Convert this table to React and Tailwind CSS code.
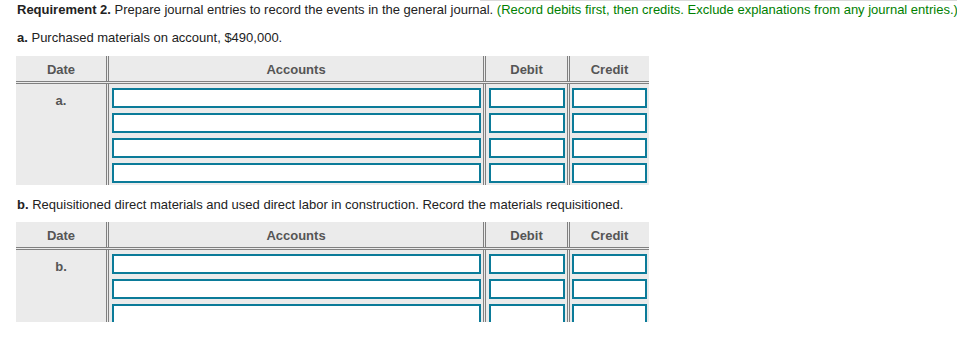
const rowsA = [0, 1, 2, 3];
const rowsB = [0, 1, 2];

const Field = ({ className = '' }) => (
  <input
    type="text"
    className={`block h-[20px] border-2 border-[#0b7b99] bg-white outline-none ${className}`}
  />
);

const JournalTable = ({ label, rows, clip }) => (
  <div className={`w-[633px] bg-[#ebebeb] ${clip ? 'h-[100px] overflow-hidden' : ''}`}>
    {/* Header */}
    <div className="flex h-[28px] border-b-[3px] border-double border-[#808080] pt-[2px] text-[13px] font-bold text-[#555] leading-[23px]">
      <div className="w-[90px] text-center">Date</div>
      <div className="-mt-[2px] w-[377px] border-l-[3px] border-double border-[#808080] pt-[2px] text-center">Accounts</div>
      <div className="-mt-[2px] w-[84px] border-l-[3px] border-double border-[#808080] pt-[2px] text-center">Debit</div>
      <div className="-mt-[2px] w-[82px] border-l-[3px] border-double border-[#808080] pt-[2px] text-center">Credit</div>
    </div>

    {/* Body */}
    <div className="flex">
      <div className="w-[90px] pt-[9px] text-center text-[13px] font-bold leading-[16px] text-[#555]">
        {label}
      </div>
      <div className="flex w-[377px] flex-col gap-[5px] border-l-[3px] border-double border-[#808080] pt-[4px] pb-[2px] pl-[3px] pr-[2px]">
        {rows.map((r) => (
          <Field key={r} className="w-[369px]" />
        ))}
      </div>
      <div className="flex w-[84px] flex-col gap-[5px] border-l-[3px] border-double border-[#808080] pt-[4px] pb-[2px] pl-[3px] pr-[2px]">
        {rows.map((r) => (
          <Field key={r} className="w-[76px]" />
        ))}
      </div>
      <div className="flex w-[82px] flex-col gap-[5px] border-l-[3px] border-double border-[#808080] pt-[4px] pb-[2px] pl-[2px] pr-[2px]">
        {rows.map((r) => (
          <Field key={r} className="w-[75px]" />
        ))}
      </div>
    </div>
  </div>
);

export default function App() {
  return (
    <div
      className="relative h-[337px] w-[957px] overflow-hidden bg-white pl-[16px] pt-[2px] text-[13px] text-[#222]"
      style={{ fontFamily: '"Liberation Sans", Arial, sans-serif' }}
    >
      <div className="absolute top-0 left-[480px] right-0 h-px bg-[#d9d9d9]" />

      {/* Instructions */}
      <p className="pl-px leading-[16px] whitespace-nowrap">
        <span className="font-bold">Requirement 2.</span> Prepare journal entries to record the events in the
        general journal.{' '}
        <span className="text-[#008000]">
          (Record debits first, then credits. Exclude explanations from any journal entries.)
        </span>
      </p>

      <p className="mt-[12px] pl-px leading-[16px]">
        <span className="font-bold">a.</span> Purchased materials on account, $490,000.
      </p>

      <div className="mt-[10px]">
        <JournalTable label="a." rows={rowsA} />
      </div>

      <p className="mt-[12px] pl-px leading-[16px]">
        <span className="font-bold">b.</span> Requisitioned direct materials and used direct labor in construction.
        Record the materials requisitioned.
      </p>

      <div className="mt-[9px]">
        <JournalTable label="b." rows={rowsB} clip />
      </div>
    </div>
  );
}
